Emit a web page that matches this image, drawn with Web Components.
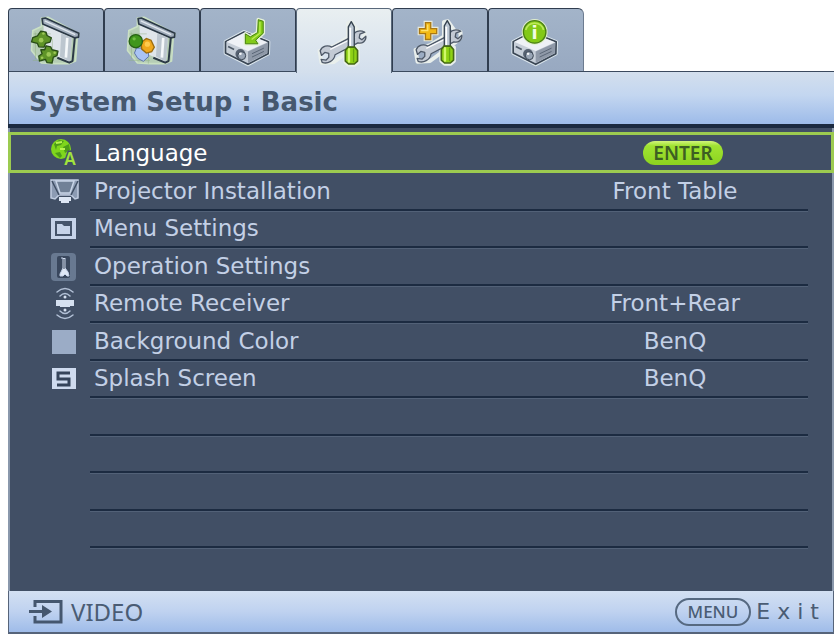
<!DOCTYPE html>
<html lang="en">
<head>
<meta charset="utf-8">
<title>System Setup : Basic</title>
<style>
  body {
    margin: 0;
    background: #fff;
    font-family: "DejaVu Sans", "Noto Sans", sans-serif;
  }
</style>
</head>
<body>
<osd-menu></osd-menu>

<template id="t-menu">
  <style>
    :host { display: flex; flex-direction: column; min-height: 100vh; box-sizing: border-box; padding: 8px 6px 0 8px; }
    nav { display: flex; }
    main { flex: 1; display: flex; flex-direction: column; background: #414f65; border: solid #8a98ac; border-width: 0 2px; }
    h1 {
      margin: 0; padding: 0 20px; height: 53px; box-sizing: border-box;
      border-top: 1px solid #3b4a5e; border-left: 1px solid #3b4a5e;
      background: linear-gradient(#d3dfed, #c3d6f0 45%, #9dbbe9);
      color: #46586f; font-size: 26px; line-height: 60px; font-weight: 700;
    }
    .rule { height: 4px; background: #1b2a40; }
    ul { list-style: none; margin: 4px -2px 0; padding: 0; flex: 1; display: grid; grid-template-rows: 41px; grid-auto-rows: 1fr; }
    .spare { flex: none; height: 43px; }
  </style>
  <nav aria-label="Menus"></nav>
  <h1>System Setup : Basic</h1>
  <div class="rule"></div>
  <main>
    <ul>
      <osd-row selected icon="language" label="Language" enter></osd-row>
      <osd-row icon="install" label="Projector Installation">Front Table</osd-row>
      <osd-row icon="menu" label="Menu Settings"></osd-row>
      <osd-row icon="operation" label="Operation Settings"></osd-row>
      <osd-row icon="remote" label="Remote Receiver">Front+Rear</osd-row>
      <osd-row icon="color" label="Background Color">BenQ</osd-row>
      <osd-row icon="splash" label="Splash Screen">BenQ</osd-row>
      <osd-row></osd-row><osd-row></osd-row><osd-row></osd-row><osd-row></osd-row>
    </ul>
    <div class="spare"></div>
  </main>
  <osd-footer></osd-footer>
</template>

<script>
const screenArt = `
  <g stroke-linejoin="round">
    <path d="M122 52 L142 50 L236 100 L230 114 L225 182 L205 190 L160 190 L122 188 L92 150 L96 90 L122 78Z" fill="#b9d1b4" stroke="#cfe6c4" stroke-width="5" opacity=".9"/>
    <path d="M128 72 L214 110 L208 186 L150 160 L130 120Z" fill="#dfe5ea"/>
    <path d="M182 98 L214 112 L208 184 L178 168Z" fill="#bcc6cf"/>
    <path d="M200 112 L196 172" stroke="#f5f8fa" stroke-width="8"/>
    <path d="M170 172 L206 187 L216 182 L223 110" fill="none" stroke="#2b3946" stroke-width="6"/>
    <path d="M124 54 L134 52 L235 98 L234 110 L222 112 L126 70Z" fill="#a3afbd" stroke="#2b3946" stroke-width="5"/>
    <path d="M132 61 L224 102" stroke="#e1e7ee" stroke-width="4"/>
    <path d="M104 96 V176 M155 116 V190 M98 100 H150 M96 180 H160" stroke="#8fb07c" stroke-width="2" opacity=".7"/>
  </g>`;
const box = `
  <g stroke-linejoin="round">
    <path d="M104 124 L160 94 L234 124 L233 160 L172 192 L104 158Z" fill="none" stroke="#dce7ee" stroke-width="11"/>
    <path d="M104 124 L160 94 L234 124 L233 160 L172 192 L104 158Z" fill="#c6ced8" stroke="#3a4654" stroke-width="5"/>
    <path d="M107 124 L160 97 L230 125 L172 152Z" fill="#eef1f6"/>
    <path d="M172 153 L231 127 L230 158 L172 188Z" fill="#8f99a8"/>
    <path d="M184 160 L220 143 M184 170 L220 153" stroke="#5b6777" stroke-width="3"/>
    <path d="M112 138 L130 147" stroke="#4c5866" stroke-width="5"/>
    <circle cx="149" cy="161" r="15" fill="#566171"/>
    <circle cx="153" cy="166" r="12" fill="#99a5b5" stroke="#3a4654" stroke-width="3"/>
    <circle cx="149" cy="160" r="4" fill="#f4f6f9"/>
  </g>`;
const tools = `
  <g stroke-linejoin="round" stroke-linecap="round">
    <g fill="none" stroke="#e9efec" stroke-width="12">
      <path d="M386 148 L392 184 L430 182 L506 126 L522 112 L522 94 L504 90 L484 62 L472 64 V108 L430 134Z"/>
      <path d="M464 140 H502 V182 L492 190 H474 L464 182Z"/>
    </g>
    <path d="M388 148 C394 133 411 130 423 137 L489 103 C490 89 507 84 523 92 L508 98 L506 109 L514 115 L526 104 C528 119 514 128 502 124 L433 160 C430 179 410 189 394 183 L391 174 L406 176 L414 168 L414 156 L402 153 L392 162Z" fill="#c3cad4" stroke="#4e5968" stroke-width="4"/>
    <path d="M420 143 L492 108" stroke="#fafbfc" stroke-width="4"/>
    <path d="M482 60 L473 76 V138 H491 V76Z" fill="#bcc7d3" stroke="#35424f" stroke-width="4"/>
    <path d="M479 80 V132" stroke="#fff" stroke-width="5"/>
    <path d="M464 147 L472 137 H492 L501 147 V179 L491 188 H474 L464 179Z" fill="#8fd116" stroke="#456914" stroke-width="5"/>
    <path d="M475 143 V181" stroke="#d1f86b" stroke-width="7"/>
    <path d="M489 143 V181" stroke="#66a80c" stroke-width="4"/>
  </g>`;
const TABS = [
  ['Display', '24 28 284 184', screenArt + `
    <g fill="#5f9428" stroke="#294d17" stroke-width="4" stroke-linejoin="round">
      <path d="M120 92 L136 95 L139 105 L152 112 L148 125 L134 129 L130 140 L114 139 L110 129 L92 124 L96 111 L110 106Z"/>
      <path d="M136 136 L150 139 L154 148 L172 152 L169 166 L158 170 L154 188 L139 187 L134 177 L116 182 L114 167 L124 160 L120 148 L132 148Z"/>
    </g>
    <g fill="#9cc756"><circle cx="121" cy="119" r="7"/><circle cx="144" cy="162" r="7"/><circle cx="128" cy="99" r="4"/><circle cx="124" cy="172" r="4"/><circle cx="162" cy="157" r="4"/></g>`],
  ['Picture', '312 28 284 184', `<g transform="translate(288 0)">${screenArt}</g>
    <path d="M407 143 L442 143 L444 168 L428 183 L411 174 L401 158Z" fill="#a9c3f4" stroke="#5e75a8" stroke-width="3"/>
    <path d="M421 126 L437 114 L451 119 L461 140 L453 154 L437 158 L423 146Z" fill="#efa81c" stroke="#9a6c10" stroke-width="4"/>
    <circle cx="405" cy="122" r="20" fill="#40961b" stroke="#276214" stroke-width="4"/>
    <circle cx="400" cy="115" r="5" fill="#70bd43"/><circle cx="440" cy="131" r="8" fill="#ffcb4d"/>`],
  ['Source', '30 28 284 184', box + `
    <path d="M203 57 L218 62 V98 L195 119 L202 130 H164 V100 L179 109 L201 96Z" fill="#82ca18" stroke="#e6f2d8" stroke-width="11" stroke-linejoin="round"/>
    <path d="M203 57 L218 62 V98 L195 119 L202 130 H164 V100 L179 109 L201 96Z" fill="#82ca18" stroke="#47820d" stroke-width="3" stroke-linejoin="round"/>
    <path d="M208 64 V98 L183 117" fill="none" stroke="#bdee55" stroke-width="4"/>`],
  ['System Setup : Basic', '318 28 284 184', tools],
  ['System Setup : Advanced', '36 28 284 184', `<g transform="translate(-282 0)">${tools}</g>
    <path d="M134 66 H150 V84 H168 V99 H150 V117 H134 V99 H116 V84 H134Z" fill="#f1b916" stroke="#e8eadb" stroke-width="11"/>
    <path d="M134 66 H150 V84 H168 V99 H150 V117 H134 V99 H116 V84 H134Z" fill="#f1b916" stroke="#a97814" stroke-width="4"/>
    <path d="M141 72 V90 H121" fill="none" stroke="#ffe36c" stroke-width="4"/>`],
  ['Information', '324 28 284 184', `<g transform="translate(293 0)">${box}</g>
    <circle cx="462" cy="94" r="39" fill="#dfeecb"/>
    <circle cx="462" cy="94" r="34" fill="#82c916" stroke="#497f13" stroke-width="4"/>
    <path d="M435 88 A28 28 0 0 1 489 88" fill="none" stroke="#bce958" stroke-width="5"/>
    <text x="462" y="114" text-anchor="middle" font-family="DejaVu Sans, sans-serif" font-weight="700" font-size="54" fill="#f2fbe2">i</text>`]
];

const ICONS = {
  language: `<circle cx="13" cy="13" r="10" fill="#7fd61c"/>
    <path d="M6 8 L11 4 L16 5 L13 9 L9 10 L8 14Z M15 11 L21 8 L22 14 L17 17Z M7 17 L12 16 L14 20 L12 22Z" fill="#4d9c18"/>
    <path d="M8 7 L14 6 M12 13 H17" stroke="#b9f450" stroke-width="2"/>
    <text x="22" y="29" text-anchor="middle" font-family="Noto Sans, sans-serif" font-size="17" font-weight="600" fill="#a2e33c" stroke="#414f65" stroke-width="3" paint-order="stroke">A</text>`,
  install: `<path d="M3 5 H30 V23 L27 24 L23 20 H11 L7 24 L3 23Z" fill="#8c9bb3" stroke="#c0cce0" stroke-width="1.5"/>
    <path d="M8 6 H26 L22 18 H12Z" fill="#718197" stroke="#c8d4e6" stroke-width="1.5"/>
    <path d="M4 6 L11 20 M30 6 L23 20" stroke="#414f65" stroke-width="1.5"/>
    <path d="M11 22 H23 V26 H21 V28 H13 V26 H11Z" fill="#dde6f4"/>`,
  menu: `<rect x="3" y="6" width="25" height="21" fill="#c6d3e9"/><rect x="7" y="9" width="17" height="15" fill="#45546b"/>
    <path d="M9 12 H14 L16 14 H22 V22 H9Z" fill="#c6d3e9"/>`,
  operation: `<rect x="3" y="3" width="25" height="28" rx="4" fill="#687991"/><rect x="9" y="6" width="13" height="22" rx="2" fill="#39475d"/>
    <path d="M13 8 H15 V18 L12 24 V26 H15 L17 24 L19 26 H21 L20 22 L17 18 V8" fill="#dfe8f6" stroke="#c6d3e9" stroke-width="1"/><path d="M16 9 V19" stroke="#39475d"/>`,
  remote: `<g fill="none" stroke="#b2c0d6" stroke-width="1.5" stroke-linecap="round"><path d="M9 5 Q17 -2 25 5 M12 9 Q17 4 22 9 M9 28 Q17 35 25 28 M12 24 Q17 29 22 24"/></g>
    <path d="M8 13 H26 V19 H22 V20 H12 V19 H8Z" fill="#d5e0f0"/><circle cx="17" cy="10" r="1.5" fill="#d5e0f0"/><circle cx="17" cy="23" r="1.5" fill="#d5e0f0"/>`,
  color: `<rect x="4" y="5" width="24" height="24" fill="#9bacc6"/>`,
  splash: `<rect x="4" y="6" width="24" height="21" fill="#cfdbef"/>
    <path d="M22 11 H10 V17 H21 V23 H9" fill="none" stroke="#35445b" stroke-width="3"/>`
};

customElements.define('osd-tab', class extends HTMLElement {
  connectedCallback() {
    const [label, viewBox, art] = TABS[this.getAttribute('index')];
    this.attachShadow({ mode: 'open' }).innerHTML = `
      <style>
        :host { display: block; }
        button { display: block; padding: 0; margin: 0; border: 1px solid #303d4f; border-bottom: 0; border-radius: 4px 4px 0 0; background: linear-gradient(#a3b4c9, #98a9c1); height: 63px; width: 96px; }
        :host([active]) button { background: linear-gradient(#e9eff1, #d3dfed); position: relative; height: 65px; margin-bottom: -2px; border-color: #59687a; }
        :host(:last-child) button { border-right-color: #6d7c90; border-top-right-radius: 6px; }
        svg { display: block; width: 94px; height: 61px; }
      </style>
      <button type="button" aria-label="${label}"><svg viewBox="${viewBox}" aria-hidden="true">${art}</svg></button>`;
  }
});

customElements.define('osd-row', class extends HTMLElement {
  connectedCallback() {
    const icon = this.getAttribute('icon'), label = this.getAttribute('label') || '';
    this.attachShadow({ mode: 'open' }).innerHTML = `
      <style>
        :host { display: grid; grid-template-columns: 40px 32px 10px 1fr 266px 26px; align-items: center; box-sizing: border-box; min-width: 0; color: #c3d0e6; font-size: 23px; line-height: 30px; }
        :host([selected]) { box-shadow: inset 0 0 0 3px #9ccb50; color: #fff; }
        .icon { grid-column: 2; }
        svg { display: block; width: 32px; height: 34px; overflow: visible; }
        .label { grid-column: 4; padding-left: 4px; }
        .value { grid-column: 5; justify-content: center; }
        .label, .value { align-self: stretch; display: flex; align-items: center; border-bottom: 2px solid #1c2b41; box-shadow: 0 1px #526177; }
        :host([selected]) .label, :host([selected]) .value { border: 0; box-shadow: none; }
        button { margin: 0 0 0 16px; padding: 0 10px; border: 0; border-radius: 12px; background: linear-gradient(#d2f47c, #a0e332 20%, #8cd31f); color: #3d5f22; font: 600 19px/24px "Noto Sans", sans-serif; }
      </style>
      <span class="icon">${icon ? `<svg viewBox="0 0 32 34" aria-hidden="true">${ICONS[icon]}</svg>` : ''}</span>
      <span class="label">${label}</span>
      <span class="value">${this.hasAttribute('enter') ? '<button type="button">ENTER</button>' : '<slot></slot>'}</span>`;
    this.setAttribute('role', 'listitem');
  }
});

customElements.define('osd-footer', class extends HTMLElement {
  connectedCallback() {
    this.attachShadow({ mode: 'open' }).innerHTML = `
      <style>
        :host { display: flex; align-items: center; justify-content: space-between; height: 43px; box-sizing: border-box; padding: 0 14px 0 20px; border: solid #56647a; border-width: 0 1px 2px; background: linear-gradient(#d3e0f2, #bfd2f0 50%, #9fbce9); color: #4a5c74; font-size: 22px; line-height: 28px; }
        .source, .exit { display: flex; align-items: center; gap: 8px; }
        svg { display: block; width: 34px; height: 24px; }
        .source { font-family: "Noto Sans", sans-serif; font-size: 24px; }
        .exit { gap: 5px; }
        button { margin: 0; padding: 0 11px; border: 2px solid #566981; border-radius: 14px; background: none; color: inherit; font: 500 17px/24px "Noto Sans", sans-serif; }
      </style>
      <span class="source"><svg viewBox="0 0 34 24" aria-hidden="true"><path d="M6 7 V1.5 H32 V22 H6 V16" fill="none" stroke="#45576f" stroke-width="3"/><path d="M0 10 H13 V5 L23 11.5 L13 18 V13 H0Z" fill="#45576f"/></svg>VIDEO</span>
      <span class="exit"><button type="button">MENU</button><span>E x i t</span></span>`;
  }
});

customElements.define('osd-menu', class extends HTMLElement {
  connectedCallback() {
    const root = this.attachShadow({ mode: 'open' });
    root.append(document.getElementById('t-menu').content.cloneNode(true));
    const nav = root.querySelector('nav');
    nav.innerHTML = TABS.map((t, i) => `<osd-tab index="${i}"${i === 3 ? ' active' : ''}></osd-tab>`).join('');
  }
});
</script>
</body>
</html>
